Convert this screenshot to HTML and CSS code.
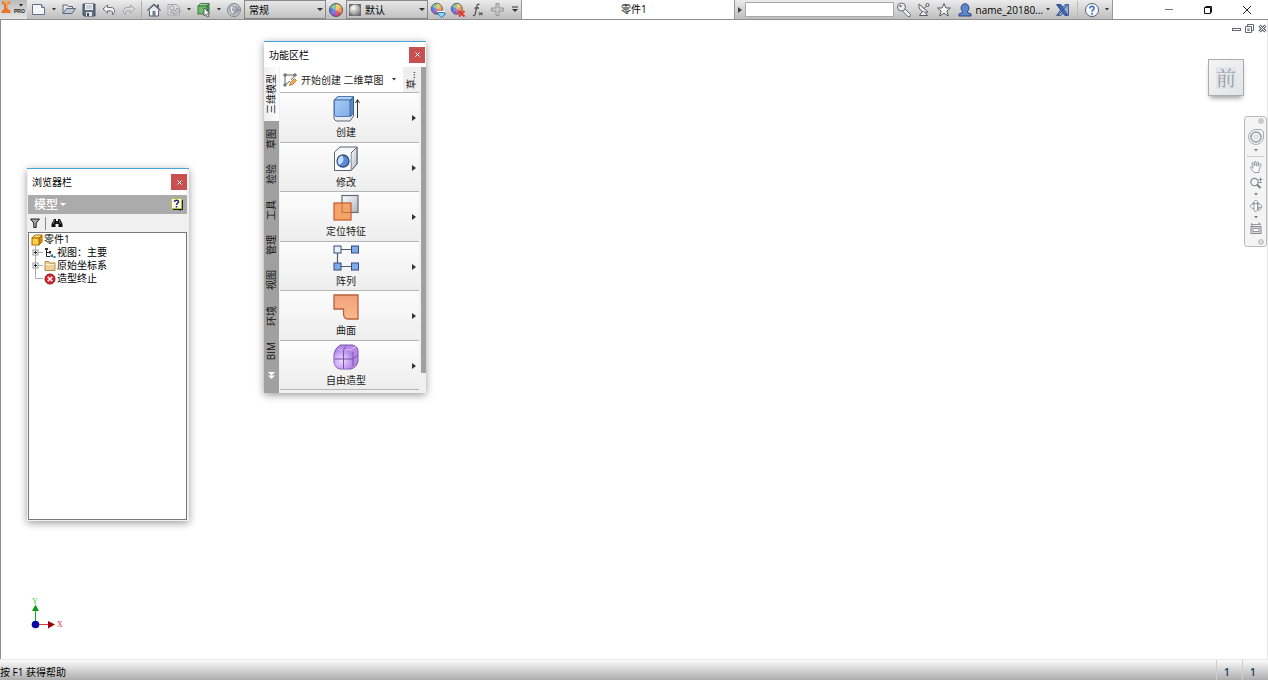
FILE: index.html
```html
<!DOCTYPE html>
<html lang="zh-CN">
<head>
<meta charset="utf-8">
<title>零件1</title>
<link rel="stylesheet" href="styles.css">
</head>
<body>
<svg class="defs" aria-hidden="true">
  <defs>
    <linearGradient id="blue" x1="0" y1="0" x2="1" y2="1"><stop offset="0" stop-color="#a9cdf5"/><stop offset="1" stop-color="#7fabe6"/></linearGradient>
    <linearGradient id="orange" x1="0" y1="0" x2="0" y2="1"><stop offset="0" stop-color="#f2a07a"/><stop offset="1" stop-color="#fbb98a"/></linearGradient>
    <linearGradient id="steel" x1="0" y1="0" x2="1" y2="1"><stop offset="0" stop-color="#ffffff"/><stop offset="1" stop-color="#aeb4be"/></linearGradient>
    <radialGradient id="violet" cx="0.4" cy="0.55" r="0.65"><stop offset="0" stop-color="#efe0ff"/><stop offset="0.6" stop-color="#cda8f5"/><stop offset="1" stop-color="#ae82e2"/></radialGradient>
    <radialGradient id="shine" cx="0.35" cy="0.3" r="0.7"><stop offset="0" stop-color="#fff" stop-opacity="0.4"/><stop offset="1" stop-color="#fff" stop-opacity="0"/></radialGradient>
    <radialGradient id="gray-ball" cx="0.35" cy="0.3" r="0.7"><stop offset="0" stop-color="#fff"/><stop offset="1" stop-color="#8a8a8a"/></radialGradient>
    <g id="wheel">
      <path d="M8 8V1.500A6.500 6.500 0 0 1 13.600 4.700Z" fill="#f0c040"/>
      <path d="M8 8L13.600 4.700A6.500 6.500 0 0 1 13.600 11.300Z" fill="#f0943c"/>
      <path d="M8 8L13.600 11.300A6.500 6.500 0 0 1 8 14.500Z" fill="#d8465c"/>
      <path d="M8 8V14.500A6.500 6.500 0 0 1 2.400 11.300Z" fill="#8050c8"/>
      <path d="M8 8L2.400 11.300A6.500 6.500 0 0 1 2.400 4.700Z" fill="#2f58dc"/>
      <path d="M8 8L2.400 4.700A6.500 6.500 0 0 1 8 1.500Z" fill="#4aa868"/>
      <circle cx="8" cy="8" r="6.500" fill="url(#shine)" stroke="#55566a"/>
    </g>
    <g id="down"><path d="M0 0H4L2 2.500Z" fill="#333"/></g>
  </defs>
</svg>

<div class="app">
  <header class="topbar">
    <div class="quick">
      <button class="logo" aria-label="应用程序菜单">
        <svg width="27" height="19" viewBox="0 0 27 19"><path d="M2 1H10V4H8V9L10.500 10.500V13H1.500V11L4 9V4H2Z" fill="#e8762a"/><path d="M2 1H10L8 4V9L6 8V4Z" fill="#f6a45c"/><path d="M19 4H23L21 6.500Z" fill="#222"/><text x="14" y="13" class="logo-text">PRO</text></svg>
      </button>
      <button class="tool" aria-label="新建"><svg width="16" height="16" viewBox="0 0 16 16"><path d="M1.500 2.500H10.500L13.500 5.500V12.500H1.500Z" fill="#f4f6fa" stroke="#667085"/><path d="M10.500 2.500V5.500H13.500" fill="#cfd5de" stroke="#667085"/></svg></button>
      <button class="drop" aria-label="新建选项"><svg width="4" height="3"><use href="#down"/></svg></button>
      <button class="tool" aria-label="打开"><svg width="16" height="16" viewBox="0 0 16 16"><path d="M2 11.500V3H6L7.500 4.500H11.500V6.500" fill="#e4e9f0" stroke="#5c677a"/><path d="M2 11.500L5.500 6.500H14.500L11 11.500Z" fill="#bcc8d8" stroke="#5c677a"/></svg></button>
      <button class="tool" aria-label="保存"><svg width="16" height="16" viewBox="0 0 16 16"><path d="M2 2H14V14H3L2 13Z" fill="#5f6b80" stroke="#444f62"/><rect x="4" y="2" width="8" height="6" fill="#eef1f5"/><path d="M5 4H11M5 6H11" stroke="#a4abb6"/><rect x="5" y="10" width="6" height="4" fill="#dfe4ea"/><rect x="6" y="11" width="2" height="3" fill="#444c5a"/></svg></button>
      <button class="tool" aria-label="撤消"><svg width="16" height="16" viewBox="0 0 16 16"><path d="M2 7L6.500 3V5.500H10C13 5.500 14 8 13.500 10.500L11.500 13C12 10 11.500 8.800 9.500 8.800H6.500V11Z" fill="#f3f5f8" stroke="#69717e"/></svg></button>
      <button class="tool" aria-label="恢复"><svg width="16" height="16" viewBox="0 0 16 16"><path d="M14 7L9.500 3V5.500H6C3 5.500 2 8 2.500 10.500L4.500 13C4 10 4.500 8.800 6.500 8.800H9.500V11Z" fill="#d9dbde" stroke="#a3a7ad"/></svg></button>
      <span class="rule"></span>
      <button class="tool" aria-label="主页"><svg width="16" height="16" viewBox="0 0 16 16"><path d="M3.500 8V14H12.500V8" fill="#f7f8fa" stroke="#555e6d"/><path d="M1.500 8.500L8 2.500L14.500 8.500" fill="#e6eaf0" stroke="#555e6d" stroke-width="1.500"/><path d="M11 2.500H13V6L11 4.500Z" fill="#555e6d"/><rect x="6.500" y="9" width="3" height="5" fill="#717b8b"/></svg></button>
      <button class="tool" aria-label="快照"><svg width="16" height="16" viewBox="0 0 16 16"><path d="M2 2.500H10L13.500 5.500V13H2Z" fill="#dcdddf" stroke="#a3a6ab"/><path d="M4 10.500L7 7.500L9 9.500L11 6L14.500 9L9.500 12Z" fill="#c9cbce" stroke="#999da3"/><circle cx="6" cy="6" r="2" fill="#eee" stroke="#999"/></svg></button>
      <button class="drop" aria-label="快照选项"><svg width="4" height="3"><use href="#down"/></svg></button>
      <button class="tool" aria-label="选择"><svg width="16" height="16" viewBox="0 0 16 16"><path d="M2 4L4.500 1.500H13L11 4Z" fill="#a9d6a6" stroke="#3c7b42"/><path d="M11 4L13 1.500V10L11 12Z" fill="#3f8b47" stroke="#3c7b42"/><rect x="2" y="4" width="9" height="8" fill="#6ebb6c" stroke="#3c7b42"/><path d="M8 6V14L10 12.300L11.300 15L12.800 14.300L11.500 11.700L14 11.500Z" fill="#fff" stroke="#444" stroke-width="0.800"/></svg></button>
      <button class="drop" aria-label="选择选项"><svg width="4" height="3"><use href="#down"/></svg></button>
      <button class="tool" aria-label="更新"><svg width="16" height="16" viewBox="0 0 16 16"><circle cx="8" cy="8" r="6.500" fill="#c6cad0" stroke="#7f858f"/><path d="M4 4.500Q6 2.500 8 5L6 8H8V13Q4 11 4 8Z" fill="#ecedf0" stroke="#848a94"/><path d="M10 4V12M12 5V11M9.500 8H14" stroke="#7c828d"/></svg></button>
      <label class="combo"><select aria-label="材料"><option>常规</option></select><svg class="combo-arrow" width="6" height="4" viewBox="0 0 6 4"><path d="M0 0H6L3 3Z" fill="#333"/></svg></label>
      <button class="tool" aria-label="外观浏览器"><svg width="16" height="16" viewBox="0 0 16 16"><use href="#wheel"/></svg></button>
      <label class="combo"><svg class="swatch" width="12" height="12" viewBox="0 0 12 12"><rect width="12" height="12" fill="#6a6e74"/><circle cx="6" cy="6" r="5.500" fill="url(#gray-ball)"/></svg><select aria-label="外观"><option>默认</option></select><svg class="combo-arrow" width="6" height="4" viewBox="0 0 6 4"><path d="M0 0H6L3 3Z" fill="#333"/></svg></label>
      <button class="tool" aria-label="调整外观"><svg width="16" height="16" viewBox="0 0 16 16"><use href="#wheel" transform="scale(.85)"/><path d="M8 10.500H14.500V12H15.500L11.500 15.500L7.500 12H8Z" fill="#8fd6f8" stroke="#2276aa" stroke-width="0.900"/><path d="M7 9.500H15" stroke="#fff"/></svg></button>
      <button class="tool" aria-label="清除外观"><svg width="16" height="16" viewBox="0 0 16 16"><use href="#wheel" transform="scale(.85)"/><path d="M9 9L14.500 14.500M14.500 9L9 14.500" stroke="#df3d2f" stroke-width="2"/></svg></button>
      <button class="tool" aria-label="参数"><svg width="16" height="16" viewBox="0 0 16 16"><path d="M9.500 2.500C7.500 1.500 7 3.500 6.700 5L5.300 11.500C5 13.500 4 14 2.800 13.300M4.500 6H9" fill="none" stroke="#555" stroke-width="1.300"/><path d="M9 10.500L12.500 13M12.500 10.500L9 13" stroke="#555" stroke-width="1.200"/></svg></button>
      <button class="tool" aria-label="添加"><svg width="16" height="16" viewBox="0 0 16 16"><path d="M6 1.500H9V6H13.500V9H9V13.500H6V9H1.500V6H6Z" fill="#c8c9cb" stroke="#94969a"/></svg></button>
      <button class="drop drop-wide" aria-label="自定义"><svg width="8" height="7" viewBox="0 0 8 7"><path d="M1 1H7" stroke="#333"/><path d="M1 3H7L4 6Z" fill="#333"/></svg></button>
    </div>
    <h1 class="doc-title">零件1</h1>
    <div class="info">
      <button class="drop" aria-label="展开搜索"><svg width="4" height="6" viewBox="0 0 4 6"><path d="M0 0L4 3L0 6Z" fill="#444"/></svg></button>
      <input class="search" type="text" aria-label="搜索">
      <button class="tool" aria-label="搜索帮助"><svg width="16" height="16" viewBox="0 0 16 16"><path d="M8 6L14.500 12.500L14 14.500H12L6 8.500" fill="#f2f2f2" stroke="#666b74"/><circle cx="5.500" cy="5" r="4" fill="#eceef1" stroke="#666b74"/><circle cx="4.500" cy="4" r="1.200" fill="#777d87"/></svg></button>
      <button class="tool" aria-label="通讯中心"><svg width="16" height="16" viewBox="0 0 16 16"><path d="M3 2C2 7 6 11.500 12 10Z" fill="#eceef1" stroke="#555b65"/><path d="M8 6.500L11 3.500M6 10L3.500 13.500H11.500L9 10.500" fill="#eee" stroke="#555b65"/><circle cx="11.500" cy="3" r="1.500" fill="#eee" stroke="#555b65"/></svg></button>
      <button class="tool" aria-label="收藏夹"><svg width="16" height="16" viewBox="0 0 16 16"><path d="M8 1.500L9.900 6H14.500L10.900 9L12.300 14L8 11.200L3.700 14L5.100 9L1.500 6H6.100Z" fill="#f7f8fa" stroke="#555b65"/></svg></button>
      <button class="account"><svg width="16" height="16" viewBox="0 0 16 16"><path d="M5.500 9.500C3 7 4 1.800 8 1.800S13 7 10.500 9.500V10.500L14 12V14H2V12L5.500 10.500Z" fill="#5d86cf" stroke="#28427c"/></svg><span>name_20180...</span><svg width="4" height="3"><use href="#down"/></svg></button>
      <button class="tool" aria-label="Exchange"><svg width="16" height="16" viewBox="0 0 16 16"><path d="M1.500 2.500H6L8 5.500L10 2.500H13.500V13.500H10L8 10.500L6 13.500H1.500L5.500 8Z" fill="#8fa8d8" stroke="#49618f"/><path d="M2.500 3H5.500L12.500 13H9.500ZM12.500 3L3 13" fill="#4470c4" stroke="#2e4c8c"/></svg></button>
      <span class="rule"></span>
      <button class="tool" aria-label="帮助"><svg width="16" height="16" viewBox="0 0 16 16"><circle cx="8" cy="8" r="6.500" fill="#f6f9ff" stroke="#58606e"/><path d="M5.800 6.500C5.800 3.500 10.200 3.800 10.100 6.300C10 8 8 7.800 8 9.800" fill="none" stroke="#3c70c0" stroke-width="1.600"/><circle cx="8" cy="11.800" r="1" fill="#3c70c0"/></svg></button>
      <button class="drop" aria-label="帮助选项"><svg width="4" height="3"><use href="#down"/></svg></button>
    </div>
    <div class="window-controls">
      <button aria-label="最小化"><svg width="10" height="10" viewBox="0 0 10 10"><path d="M1 4.500H9" stroke="#777"/></svg></button>
      <button aria-label="还原"><svg width="10" height="10" viewBox="0 0 10 10"><path d="M1.500 2.500H7.500V8.500H1.500ZM2.500 1.500H8.500V7.500" fill="none" stroke="#111"/></svg></button>
      <button aria-label="关闭"><svg width="10" height="10" viewBox="0 0 10 10"><path d="M1 1L9 9M9 1L1 9" stroke="#222"/></svg></button>
    </div>
  </header>

  <main class="canvas">
    <div class="doc-controls">
      <button aria-label="最小化文档"><svg width="9" height="9" viewBox="0 0 9 9"><rect x="0.500" y="4.500" width="8" height="2" fill="#fff" stroke="#666b76"/></svg></button>
      <button aria-label="还原文档"><svg width="9" height="9" viewBox="0 0 9 9"><path d="M0.500 2.500H6.500V8.500H0.500ZM2.500 2.500V0.500H8.500V6.500H6.500M2 5H5M2.500 6.500H4.500" fill="none" stroke="#666b76"/></svg></button>
      <button aria-label="关闭文档"><svg width="9" height="9" viewBox="0 0 9 9"><path d="M1.500 1.500L7.500 7.500M7.500 1.500L1.500 7.500" stroke="#666b76" stroke-width="3"/><path d="M1.500 1.500L7.500 7.500M7.500 1.500L1.500 7.500" stroke="#fff"/></svg></button>
    </div>

    <button class="cube"><span>前</span></button>

    <nav class="navbar" aria-label="导航栏">
      <svg class="nav-end" width="6" height="6" viewBox="0 0 6 6"><circle cx="3" cy="3" r="2.300" fill="none" stroke="#aaa"/><path d="M2 2L4 4M4 2L2 4" stroke="#aaa" stroke-width="0.700"/></svg>
      <button class="wheel" aria-label="控制盘"><svg width="18" height="18" viewBox="0 0 18 18"><path d="M9 1.500H14.500L16.500 4V9A7.500 7.500 0 1 1 9 1.500Z" fill="#f2f2f2" stroke="#aaadb2"/><circle cx="9" cy="9" r="5" fill="#fafafa" stroke="#989ba1" stroke-width="1.500"/><rect x="7" y="7" width="4" height="4" rx="1" fill="#eee" stroke="#ccc"/></svg></button>
      <svg class="nav-arrow" width="4" height="3" opacity="0.600"><use href="#down"/></svg>
      <hr>
      <button aria-label="平移"><svg width="14" height="14" viewBox="0 0 14 14"><path d="M5 12.500L1.500 8C1 6.800 2.200 6.500 3 7.300L4.200 8.300L2.800 3.500C2.700 2.500 4 2.300 4.300 3.300L5.500 6L5.300 2C5.500 1 6.700 1.200 6.800 2L7.300 6L8.300 2.300C8.700 1.500 9.800 2 9.600 3L9 6.500L10.800 4C11.400 3.300 12.300 4 12 4.800L10 10V12.500Z" fill="#fff" stroke="#868a91" stroke-width="0.800"/></svg></button>
      <button aria-label="缩放"><svg width="14" height="14" viewBox="0 0 14 14"><circle cx="5.500" cy="6" r="3.700" fill="#f7f7f7" stroke="#868a91" stroke-width="1.200"/><path d="M8 8.500L11.500 12" stroke="#777b82" stroke-width="2"/><path d="M9.500 3.500H13.500M11.500 1.500V5.500M9.500 6.500H13" stroke="#777b82" stroke-width="0.800"/></svg></button>
      <svg class="nav-arrow" width="4" height="3" opacity="0.600"><use href="#down"/></svg>
      <button aria-label="动态观察"><svg width="14" height="14" viewBox="0 0 14 14"><path d="M5 9.500C0 9 0 5.500 5 5M8.500 5C13 5.200 14 7.500 11.500 9M5 3.500V11L6.500 13L8.500 11V3.500M3.500 4.500L6.700 1L10 4.500ZM9 8L12.500 8.500L10 11.500Z" fill="#fff" stroke="#888c93" stroke-width="0.900"/></svg></button>
      <svg class="nav-arrow" width="4" height="3" opacity="0.600"><use href="#down"/></svg>
      <button aria-label="观察方向"><svg width="14" height="14" viewBox="0 0 14 14"><rect x="2" y="4.500" width="10" height="7" fill="#ddd" stroke="#868a91"/><rect x="4" y="6.500" width="6" height="3" fill="#fff" stroke="#999"/><path d="M2 2.500H12M3 1L2 2.500L4 3.500M9 0.500L12 2.500" fill="none" stroke="#8a8e95" stroke-width="0.900"/></svg></button>
      <svg class="nav-end nav-last" width="6" height="6" viewBox="0 0 6 6"><circle cx="3" cy="3" r="2.300" fill="none" stroke="#aaa"/><path d="M1.500 3H4.500" stroke="#aaa" stroke-width="0.700"/></svg>
    </nav>

    <section class="window browser">
      <div class="titlebar"><h2>浏览器栏</h2><button class="close" aria-label="关闭浏览器栏"><svg width="5" height="5" viewBox="0 0 5 5"><path d="M0.500 0.500L4.500 4.500M4.500 0.500L0.500 4.500" stroke="#fff"/></svg></button></div>
      <div class="model-bar">
        <button class="model">模型<svg width="6" height="3" viewBox="0 0 6 3"><path d="M0 0H6L3 3Z" fill="#fff"/></svg></button>
        <button aria-label="帮助"><svg width="13" height="13" viewBox="0 0 13 13"><path d="M2 2H12V12H10V13L8 12H2Z" fill="#222"/><rect x="0.500" y="0.500" width="10" height="10" fill="#fffce0" stroke="#c6bd49"/><path d="M3.500 4C3.500 1.500 7.800 1.500 7.500 4C7.300 5.200 5.500 5 5.500 7" fill="none" stroke="#1e2480" stroke-width="1.500"/><rect x="4.700" y="8" width="1.600" height="1.500" fill="#1e2480"/></svg></button>
      </div>
      <div class="filters">
        <button aria-label="过滤器"><svg width="10" height="10" viewBox="0 0 10 10"><path d="M0.500 1H9.500L6.200 5V9.500H3.800V5Z" fill="#a8a8a8" stroke="#222"/></svg></button>
        <span class="filter-rule"></span>
        <button aria-label="查找"><svg width="12" height="10" viewBox="0 0 12 10"><path d="M3 1H5V3H7V1H9L11.500 6V9H7.500V6H4.500V9H0.500V6Z" fill="#111"/><path d="M3.500 2L2 6M8 2L9.500 6M5.500 4.500H6.500" stroke="#999" stroke-width="0.700"/></svg></button>
      </div>
      <ul class="tree">
        <li><svg width="12" height="12" viewBox="0 0 12 12"><path d="M1 4L4 1H11L8 4Z" fill="#ffe58a" stroke="#a86a00"/><path d="M8 4L11 1V8L8 11Z" fill="#d99000" stroke="#a86a00"/><rect x="1" y="4" width="7" height="7" fill="#ffd04a" stroke="#a86a00"/></svg>零件1</li>
        <li><svg width="12" height="14" viewBox="0 0 12 14"><path d="M4.500 0V14M5 6.500H12" stroke="#aaa"/><rect x="2" y="4" width="5" height="5" fill="#fff" stroke="#999"/><path d="M3 6.500H6M4.500 5V8" stroke="#222"/></svg><svg width="12" height="12" viewBox="0 0 12 12"><path d="M2.500 1V9.500H6M2.500 5.500H6" fill="none" stroke="#222"/><path d="M1 1H4V3H1ZM5 4H7V6.500H5Z" fill="#333"/><path d="M6.500 8L9 7V10H6.500ZM9.500 9H11.500V11H9.500Z" fill="#2d72a5"/></svg>视图：主要</li>
        <li><svg width="12" height="14" viewBox="0 0 12 14"><path d="M4.500 0V14M5 6.500H12" stroke="#aaa"/><rect x="2" y="4" width="5" height="5" fill="#fff" stroke="#999"/><path d="M3 6.500H6M4.500 5V8" stroke="#222"/></svg><svg width="12" height="12" viewBox="0 0 12 12"><path d="M1 1.500H4.500L5.500 3H11V10.500H1Z" fill="#f0d09a" stroke="#b08a4a"/><path d="M1.500 4.500H10.500" stroke="#fff0c8"/></svg>原始坐标系</li>
        <li><svg width="12" height="14" viewBox="0 0 12 14"><path d="M4.500 0V6.500H12" fill="none" stroke="#aaa"/></svg><svg width="12" height="12" viewBox="0 0 12 12"><circle cx="6" cy="6" r="5" fill="#dc2530" stroke="#86151c"/><path d="M3.700 3.700L8.300 8.300M8.300 3.700L3.700 8.300" stroke="#fff" stroke-width="1.500"/></svg>造型终止</li>
      </ul>
    </section>

    <section class="window ribbon">
      <div class="titlebar"><h2>功能区栏</h2><button class="close" aria-label="关闭功能区栏"><svg width="5" height="5" viewBox="0 0 5 5"><path d="M0.500 0.500L4.500 4.500M4.500 0.500L0.500 4.500" stroke="#fff"/></svg></button></div>
      <div class="ribbon-body">
        <div class="tabs" role="tablist">
          <button class="tab active" role="tab" aria-selected="true"><span>三维模型</span></button>
          <button class="tab" role="tab"><span>草图</span></button>
          <button class="tab" role="tab"><span>检验</span></button>
          <button class="tab" role="tab"><span>工具</span></button>
          <button class="tab" role="tab"><span>管理</span></button>
          <button class="tab" role="tab"><span>视图</span></button>
          <button class="tab" role="tab"><span>环境</span></button>
          <button class="tab" role="tab"><span>BIM</span></button>
          <button class="more" aria-label="更多选项卡"><svg width="7" height="7" viewBox="0 0 7 7"><path d="M0 0H7L3.500 3.500ZM0 3.500H7L3.500 7Z" fill="#fff"/></svg></button>
        </div>
        <div class="commands">
          <div class="sketch">
            <button class="sketch-main"><svg width="14" height="14" viewBox="0 0 14 14"><path d="M2 2V12L7 8M2 2H12L8 7" fill="none" stroke="#666"/><path d="M1 1H3V3H1ZM11 1H13V3H11ZM1 11H3V13H1Z" fill="#fff" stroke="#555"/><path d="M6.500 12.500L7.500 9.500L11.500 5.500L13.500 7.500L9.500 11.500Z" fill="#f5b04c" stroke="#ad6b27" stroke-width="0.800"/></svg>开始创建 二维草图<svg width="4" height="3"><use href="#down"/></svg></button>
            <button class="sketch-side"><span>草...</span></button>
          </div>
          <button class="cmd"><svg width="28" height="28" viewBox="0 0 28 28"><path d="M2 5L6 1.500H21.500V21L18 26H4L2 24Z" fill="#e9edf2" stroke="#5a6678"/><path d="M18 6L21.500 2V18L18 22Z" fill="#5c89cc" stroke="#38598c"/><path d="M2.500 5L6 1.500H21.500L18 5Z" fill="#b4d2f6" stroke="#4f78b5"/><rect x="2.500" y="5" width="15.500" height="16.500" rx="2" fill="url(#blue)" stroke="#4f78b5"/><path d="M25.500 23V5M23.500 8L25.500 4.500L27.500 8" fill="none" stroke="#333"/></svg><span>创建</span></button>
          <button class="cmd"><svg width="28" height="28" viewBox="0 0 28 28"><path d="M2.500 7L8 2H25V19L19 25.500H2.500Z" fill="#f7f8fa" stroke="#5b6474"/><path d="M19 8L25 2V19L19 25.500Z" fill="url(#steel)" stroke="#5b6474"/><path d="M3 8H18.500V25H3Z" fill="#fff"/><circle cx="11" cy="16" r="6" fill="#5a8ad8" stroke="#2f4a7c" stroke-width="1.300"/><path d="M10 10.500C13 15 11 18 7 20A6 6 0 0 1 10 10.500Z" fill="#c4ddfa"/></svg><span>修改</span></button>
          <button class="cmd"><svg width="28" height="28" viewBox="0 0 28 28"><rect x="10" y="1.500" width="16" height="17" fill="url(#steel)" stroke="#626975" stroke-width="1.200"/><rect x="2" y="9" width="17" height="17" fill="#f6a367" stroke="#c35a2c" stroke-width="1.200"/><path d="M10 9V18.500H19" fill="none" stroke="#b5704a"/></svg><span>定位特征</span></button>
          <button class="cmd"><svg width="28" height="28" viewBox="0 0 28 28"><path d="M9 5.500H20M9 22.500H20M5.500 9V19" stroke="#555c67" stroke-width="1.200"/><g fill="#7eabea" stroke="#304f7f"><rect x="2" y="2" width="7" height="7" fill="#e9f1fc"/><rect x="19.500" y="2" width="7" height="7"/><rect x="2" y="19" width="7" height="7"/><rect x="19.500" y="19" width="7" height="7"/></g></svg><span>阵列</span></button>
          <button class="cmd"><svg width="28" height="28" viewBox="0 0 28 28"><path d="M2 2H26V26H16C13 26 11.500 24 11.500 20.500V16H2Z" fill="url(#orange)" stroke="#bb603c" stroke-width="1.300"/></svg><span>曲面</span></button>
          <button class="cmd"><svg width="28" height="28" viewBox="0 0 28 28"><path d="M2 11Q2.500 6 8 2H20Q26 3 26 8V18Q25 24 19 26H8Q2.500 25 2 19Z" fill="#b68ae6" stroke="#7d55ae"/><rect x="2.500" y="7.500" width="18" height="18" rx="5" fill="url(#violet)"/><path d="M6 6.500Q12 8 19.500 6.500L24 3.500" fill="none" stroke="#d9bdf7"/><path d="M11.500 25.500V8Q12 4 15 2M2.500 16H20.500L26 12M21 9V23" fill="none" stroke="#7850a8"/></svg><span>自由造型</span></button>
        </div>
        <div class="scroll"><div class="thumb"></div></div>
      </div>
    </section>

    <svg class="axes" width="40" height="36" viewBox="0 0 40 36" role="img" aria-label="坐标轴">
      <text x="3" y="8" class="axis-y">Y</text><text x="28" y="31" class="axis-x">X</text>
      <path d="M6.500 12V28" stroke="#15b02a"/><path d="M6.500 8.500L10 15H3Z" fill="#0a9c1b"/>
      <path d="M7 28.500H20" stroke="#d83a3a"/><path d="M26 28.500L19 25V32.500Z" fill="#a00008"/>
      <circle cx="6.500" cy="28.500" r="3.800" fill="#0508a8"/>
    </svg>
  </main>

  <footer class="status"><span class="hint">按 F1 获得帮助</span><span class="count">1</span><span class="count">1</span></footer>
</div>
</body>
</html>
```
FILE: styles.css
```css
* { box-sizing: border-box; }

body {
  margin: 0;
  font: 10px/14px "Open Sans", "Noto Sans CJK SC", sans-serif;
  color: #1c1c1c;
  background: #fff;
}

button, select, input {
  margin: 0;
  padding: 0;
  border: 0;
  background: none;
  font: inherit;
  color: inherit;
}

h1, h2 { margin: 0; font-size: 10px; font-weight: 400; }
svg { display: block; flex: none; }
.defs { position: absolute; width: 0; height: 0; }

.app {
  display: flex;
  flex-direction: column;
  height: 100vh;
}

/* Top bar */
.topbar {
  display: flex;
  align-items: stretch;
  height: 20px;
  border-bottom: 1px solid #8e8e8e;
}

.quick, .info {
  display: flex;
  align-items: center;
  background: linear-gradient(#ececec, #bdbdbd);
  border-right: 1px solid #999;
}

.info { border-left: 1px solid #999; }

.logo { width: 27px; margin-right: 2px; background: linear-gradient(#bbb, #e4e4e4); }
.logo-text { font: bold 5px "Liberation Sans", sans-serif; fill: #222; }

.tool, .drop, .account {
  display: flex;
  align-items: center;
  justify-content: center;
  height: 19px;
}

.tool { width: 20px; }
.drop { width: 10px; }
.drop-wide { width: 13px; }
.rule { width: 1px; height: 17px; margin: 0 2px; background: #aaa; }

.combo {
  display: flex;
  align-items: center;
  position: relative;
  width: 82px;
  height: 19px;
  border: 1px solid #888;
  background: linear-gradient(#e6e6e6, #c2c2c2);
}

.combo select {
  flex: 1;
  min-width: 0;
  height: 17px;
  padding-left: 4px;
  appearance: none;
  color: #000;
}

.swatch { margin-left: 2px; }
.combo-arrow { position: absolute; right: 2px; top: 7px; pointer-events: none; }

.doc-title {
  flex: 1;
  padding-left: 12px;
  line-height: 19px;
  text-align: center;
  color: #000;
}

.search { width: 149px; height: 15px; padding: 0 4px; border: 1px solid #aaa; background: #fff; }
.account { gap: 3px; padding: 0 3px; color: #000; }
.info .rule { margin: 0 4px; background: #bbb; }

.window-controls { display: flex; margin-left: 36px; }
.window-controls button { display: grid; place-items: center; width: 39px; }
.window-controls::after { content: ""; width: 2px; }

/* Drawing canvas */
.canvas {
  position: relative;
  flex: 1;
  min-height: 0;
  border-left: 1px solid #8e8e8e;
  border-right: 1px solid #e6e6e6;
}

.doc-controls { position: absolute; top: 4px; right: 0; display: flex; gap: 4px; }

.cube {
  position: absolute;
  top: 39px;
  right: 23px;
  display: grid;
  place-items: center;
  width: 36px;
  height: 37px;
  border: 1px solid #aaacaf;
  background: linear-gradient(135deg, #f5f5f6, #e2e3e5);
  box-shadow: 0 4px 5px -2px #999;
  font: 20px/22px "Noto Serif CJK SC", "Noto Sans CJK SC", serif;
  color: #9a9fa9;
}

.cube span { background: #e2e5ea; }

.navbar {
  position: absolute;
  top: 96px;
  right: 0;
  display: flex;
  flex-direction: column;
  align-items: center;
  width: 23px;
  padding: 1px 0;
  border: 1px solid #bbb;
  border-radius: 3px;
  background: #f4f4f4;
}

.navbar hr { width: 17px; margin: 2px 0; border: 0; border-top: 1px solid #ccc; }
.navbar button { padding: 1px; }
.navbar .wheel { padding-top: 4px; }
.nav-end { align-self: flex-end; margin-right: 2px; }
.nav-last { margin-top: 2px; }
.nav-arrow { margin: 2px 0; }

/* Floating windows */
.window {
  position: absolute;
  display: flex;
  flex-direction: column;
  background: #f0f0f0;
  border-top: 1px solid #4aa3df;
  box-shadow: 0 2px 8px rgba(0, 0, 0, 0.4);
}

.titlebar {
  display: flex;
  align-items: center;
  justify-content: space-between;
  height: 26px;
  padding: 0 1px 0 5px;
  background: #fff;
  color: #000;
}

.close { display: grid; place-items: center; width: 16px; height: 16px; background: #c75050; }

.browser { left: 26px; top: 148px; width: 162px; height: 353px; padding: 0 2px 1px 1px; }
.browser .titlebar { padding: 0 0 0 4px; }

.model-bar {
  display: flex;
  align-items: center;
  justify-content: space-between;
  height: 19px;
  padding: 0 3px 0 6px;
  background: #ababab;
}

.model { display: flex; align-items: center; gap: 2px; font-size: 12px; font-weight: 500; color: #fff; }
.filters { display: flex; align-items: center; gap: 5px; height: 18px; padding-left: 2px; }
.filter-rule { width: 1px; height: 13px; background: #888; }

.tree {
  flex: 1;
  margin: 0;
  padding: 0 2px;
  border: 1px solid #777;
  background: #fff;
  list-style: none;
  color: #000;
}

.tree li { display: flex; align-items: center; gap: 1px; height: 13px; line-height: 13px; }

.ribbon { left: 263px; top: 21px; width: 162px; height: 352px; }
.ribbon .titlebar { height: 25px; }
.ribbon-body { flex: 1; display: flex; min-height: 0; }

.tabs { display: flex; flex-direction: column; width: 15px; background: #a0a0a0; }
.tab { flex: 1; display: grid; place-items: center; min-height: 0; padding-right: 6px; color: #111; }
.tab.active { flex: none; height: 54px; background: linear-gradient(90deg, #eee, #fff); }
.tab span, .sketch-side span { writing-mode: vertical-rl; text-orientation: sideways; transform: rotate(180deg); white-space: nowrap; }
.more { display: flex; justify-content: center; height: 24px; padding-top: 3px; }

.commands { flex: 1; display: flex; flex-direction: column; min-width: 0; margin-bottom: 3px; padding-left: 1px; }
.sketch { display: flex; height: 25px; background: #fff; }
.sketch-main { flex: 1; display: flex; align-items: center; gap: 4px; padding-left: 3px; white-space: nowrap; }
.sketch-main svg:last-child { margin-left: 4px; }
.sketch-side { display: grid; place-items: center; width: 16px; background: #eee; }

.cmd {
  position: relative;
  flex: 1;
  display: flex;
  flex-direction: column;
  align-items: center;
  gap: 2px;
  min-height: 0;
  padding: 2px 7px 0 0;
  border-top: 1px solid #b5b5b5;
  background: linear-gradient(#fdfdfd, #ededed);
}

.cmd:last-child { border-bottom: 1px solid #b5b5b5; }

.cmd::after {
  content: "";
  position: absolute;
  right: 3px;
  top: 22px;
  border: 3px solid transparent;
  border-left: 4px solid #333;
  border-right: 0;
}

.scroll { width: 7px; padding-left: 2px; }
.thumb { width: 5px; height: 94%; background: #a0a0a0; }

/* Coordinate axes */
.axes { position: absolute; left: 28px; bottom: 27px; }
.axis-x, .axis-y { font: 8px "Liberation Serif", serif; }
.axis-x { fill: #e83030; }
.axis-y { fill: #30d040; }

/* Status bar */
.status {
  display: flex;
  align-items: stretch;
  height: 21px;
  border-top: 1px solid #e8e8e8;
  background: linear-gradient(#fbfbfb, #adadad);
  line-height: 24px;
  color: #000;
}

.hint { flex: 1; }
.count { width: 26px; padding-left: 7px; border-left: 1px solid #ccc; font-weight: 600; color: #123a66; }
```
